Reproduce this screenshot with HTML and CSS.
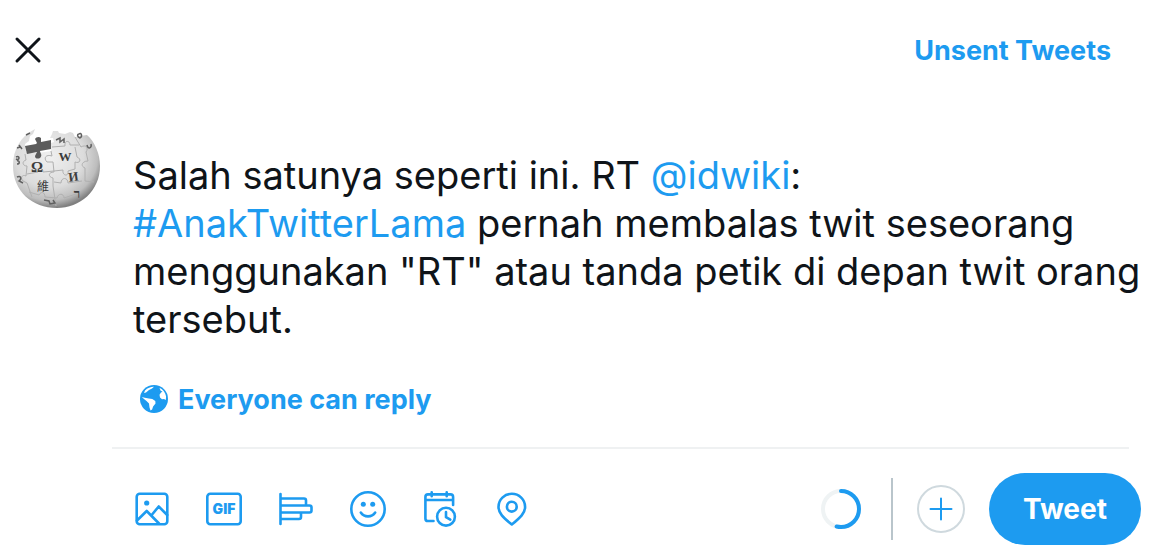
FILE: index.html
```html
<!DOCTYPE html>
<html lang="id">
  <head>
    <meta charset="utf-8">
    <title>Tweet</title>
    <meta name="viewport" content="width=device-width, initial-scale=1">
    <link rel="stylesheet" href="styles.css">
  </head>

  <body>
    <main class="composer">
      <header class="header">
        <button class="icon-button close" type="button" aria-label="Close">
          <svg width="28" height="28" viewBox="0 0 28 28"><path d="M3 3l22 22M25 3L3 25"/></svg>
        </button>
        <a class="unsent" href="#drafts">Unsent Tweets</a>
      </header>

      <div class="body">
        <svg class="avatar" viewBox="0 0 88 92" role="img" aria-label="Wikipedia">
          <defs>
            <radialGradient id="globe" cx="42%" cy="35%" r="65%">
              <stop offset="0" stop-color="#f0f0f0"/>
              <stop offset=".6" stop-color="#dcdcdc"/>
              <stop offset=".85" stop-color="#bdbdbd"/>
              <stop offset="1" stop-color="#808080"/>
            </radialGradient>
          </defs>
          <path fill="url(#globe)" d="M23 9l-2 5-3 2-1 5-4 3 1 8 12 1 13-2 0-8 3-1-1-4-3 0 2-4 1-3 5 0 1 2 6 1 5-2 3 1 2 4 5-1 7-1C83 22 88 34 88 46 88 71 68 88 45 88 20 88 1 71 1 46 1 29 9 16 23 9z"/>
          <path fill="#5c5c5c" d="M13 26l11-2 1-1-2-4c1-2 4-3 6-1l0 4 10-2v9l-11 2c0 2 3 4 0 7-2 1-5 1-5-2l2-4-10 2z"/>
          <g fill="none" stroke="#b0b0b0" stroke-width="1">
            <path d="M13 34l1 6c-4 1-4 6 1 6l-1 10c-4-2-6 2-3 5l4 2 5 14"/>
            <path d="M39 31l1 5c-6-2-9 2-5 6l6 0 1 10c-6 0-6 5-1 6l0 8 3 20"/>
            <path d="M15 54l11-2c0-5 5-5 5 0l11-1 9-1c-1 6 6 7 5 1l7-2M17 72l10 3c2-4 6-3 6 2l12 1c1-5 7-5 7 0l12-4"/>
            <path d="M40 27l13-1c-1-6 5-6 5-1l9 0M63 17l6 10c5-3 8 1 5 5l2 9c-6 0-8 5-3 7l0 13 9 1M42 62l7 1c0-6 7-6 7 0l14-2M63 49l0-7c5 2 7-3 2-5l-2-10"/>
          </g>
          <g class="glyphs" fill="#3c3c3c" text-anchor="middle">
            <text class="omega" x="25" y="52">Ω</text>
            <text x="53" y="41">W</text>
            <text x="62" y="61" transform="rotate(-8 62 61)">И</text>
            <text class="cjk" x="31" y="71">維</text>
            <text x="65" y="78">ר</text>
          </g>
          <g fill="none" stroke="#606060" stroke-width="1.500">
            <path d="M5 28l3-1M7 25l3 4M4 37c4-2 4 4 0 2M5 41c3-1 3 3 0 3M5 57c4-2 5 2 2 4l4 2M14 15l4-2M44 20l4-2v4l4-3v4M67 14c2-2 4 2 1 4-3-1-3-4-1-4zM75 25c1 5 5 3 4-1M32 80l5 1 1 3 5-1-2-3"/>
          </g>
        </svg>

        <div class="content">
          <div class="text" role="textbox" aria-multiline="true" aria-label="Tweet text" contenteditable="true" spellcheck="false">Salah satunya seperti ini. RT <a href="#idwiki">@idwiki</a>:<br><a href="#AnakTwitterLama">#AnakTwitterLama</a> pernah membalas twit seseorang menggunakan "RT" atau tanda petik di depan twit orang tersebut.</div>
          <button class="reply" type="button">
            <svg width="30" height="30" viewBox="0 0 30 30">
              <circle cx="15" cy="15" r="14" fill="#1d9bf0"/>
              <path fill="#fff" d="M6 6.500C8.500 3.800 12 2.600 15 2.700l-2 1.800-3 1.500-3 2.500-2 .5zM2.800 13l3 .8 4 .7 3.500.5 3 2 .2 2.500-2.400 3-1 3-1.600 1-1-3-.5-4-2.500-2.500-2.500-2zM20.500 3.800c3.500 1.700 6 5 6.600 8.700l-.3 3.500-1.800-1-2 .3-2-1.800-.5-2.800 1.500-2.200 1.500-.8-2-1.200z"/>
            </svg>
            <span>Everyone can reply</span>
          </button>
        </div>
      </div>

      <footer class="footer">
        <div class="tools">
          <button class="icon-button" type="button" aria-label="Add photos or video">
            <svg class="icon" viewBox="0 0 40 40">
              <rect x="4.700" y="4.700" width="30.600" height="30.600" rx="3"/>
              <path d="M5 31.500l9.700-9.500L27 34.500M19.700 26l7-8.500 8.500 8.500"/>
              <circle class="dot" cx="14.700" cy="14" r="2.600"/>
            </svg>
          </button>
          <button class="icon-button" type="button" aria-label="Add a GIF">
            <svg class="icon" viewBox="0 0 40 40">
              <rect x="3.300" y="4.700" width="33.400" height="30.600" rx="3"/>
              <text class="gif" x="20" y="25" text-anchor="middle">GIF</text>
            </svg>
          </button>
          <button class="icon-button" type="button" aria-label="Add poll">
            <svg class="icon" viewBox="0 0 40 40">
              <path d="M4.500 5v30M4.500 9.500h23.500q2 0 2 2v5M4.500 16.500h29q2 0 2 2v3q0 2-2 2h-29M25 23.500v4.500q0 2-2 2H4.500"/>
            </svg>
          </button>
          <button class="icon-button" type="button" aria-label="Add emoji">
            <svg class="icon" viewBox="0 0 40 40">
              <circle cx="20" cy="20" r="16.700"/>
              <path d="M12.800 23.500c3.400 5.200 11 5.200 14.400 0"/>
              <circle class="dot" cx="15.300" cy="15.300" r="2.500"/>
              <circle class="dot" cx="24.700" cy="15.300" r="2.500"/>
            </svg>
          </button>
          <button class="icon-button" type="button" aria-label="Schedule Tweet">
            <svg class="icon" viewBox="0 0 40 40">
              <path d="M13.500 32H8q-2.600 0-2.600-2.600V8q0-2.600 2.600-2.600h22.500q2.600 0 2.600 2.600v8M5.400 11h27.700M11.700 3.300v4M26.700 3.300v4"/>
              <circle cx="26" cy="27.700" r="8.900"/>
              <path d="M26 23v5.200l4.300 2.500"/>
            </svg>
          </button>
          <button class="icon-button" type="button" aria-label="Tag location">
            <svg class="icon" viewBox="0 0 40 40">
              <path d="M19.800 35.500C11 28.500 6.500 24 6.500 17.900a13.300 13.100 0 0 1 26.600 0C33.100 24 28.500 28.500 19.800 35.500z"/>
              <circle cx="19.800" cy="17.700" r="4.900"/>
            </svg>
          </button>
        </div>

        <div class="actions">
          <svg class="progress" viewBox="0 0 40 40" role="img" aria-label="Characters used">
            <circle cx="20" cy="20" r="18" stroke="#eff3f4"/>
            <circle cx="20" cy="20" r="18" stroke="#1d9bf0" pathLength="100" stroke-dasharray="54 100" stroke-linecap="round" transform="rotate(-90 20 20)"/>
          </svg>
          <span class="divider"></span>
          <button class="icon-button add" type="button" aria-label="Add Tweet">
            <svg width="24" height="24" viewBox="0 0 24 24"><path d="M12 1.500v21M1.500 12h21"/></svg>
          </button>
          <button class="tweet" type="button">Tweet</button>
        </div>
      </footer>
    </main>
  </body>
</html>
```
FILE: styles.css
```css
* {
  box-sizing: border-box;
}

body {
  margin: 0;
  background: #fff;
  color: #0f1419;
  font-family: Inter, "Liberation Sans", sans-serif;
}

a {
  color: #1d9bf0;
  text-decoration: none;
}

button {
  padding: 0;
  border: 0;
  background: none;
  font: inherit;
  cursor: pointer;
}

svg {
  display: block;
}

.header {
  display: flex;
  align-items: center;
  justify-content: space-between;
  height: 100px;
  padding: 0 43px 0 14px;
}

.close svg {
  fill: none;
  stroke: #0f1419;
  stroke-width: 3;
  stroke-linecap: round;
}

.unsent,
.reply {
  font-size: 27px;
  font-weight: 700;
}

.body {
  display: flex;
  gap: 33px;
  padding: 20px 12px 0;
}

.avatar {
  flex: none;
  width: 88px;
  height: 92px;
}

.glyphs {
  font: bold 13px "Liberation Serif", serif;
}

.glyphs .omega {
  font-size: 15px;
}

.glyphs .cjk {
  font: 12px "Noto Sans CJK TC", sans-serif;
}

.content {
  flex: 1;
  padding-top: 31px;
}

.text {
  font-size: 38px;
  line-height: 48px;
  outline: none;
}

.reply {
  display: flex;
  align-items: center;
  gap: 9px;
  height: 32px;
  margin: 40px 0 32px 6px;
  color: #1d9bf0;
}

.footer {
  display: flex;
  align-items: center;
  justify-content: space-between;
  padding: 26px 13px 11px 132px;
  background: linear-gradient(#eff1f2, #eff1f2) 112px 0 / calc(100% - 137px) 2px no-repeat;
}

.tools,
.actions {
  display: flex;
  align-items: center;
}

.tools {
  gap: 32px;
}

.icon {
  width: 40px;
  height: 40px;
  fill: none;
  stroke: #1d9bf0;
  stroke-width: 2.6;
  stroke-linecap: round;
  stroke-linejoin: round;
}

.icon .dot,
.icon .gif {
  fill: #1d9bf0;
  stroke: none;
}

.icon .gif {
  font-size: 14px;
  font-weight: 900;
}

.actions {
  gap: 24px;
}

.progress {
  width: 40px;
  height: 40px;
  margin-right: 6px;
  fill: none;
  stroke-width: 4;
}

.divider {
  width: 2px;
  height: 62px;
  background: #b9c5cb;
}

.add {
  display: flex;
  align-items: center;
  justify-content: center;
  width: 48px;
  height: 48px;
  border: 2px solid #cfd9de;
  border-radius: 50%;
}

.add svg {
  stroke: #1d9bf0;
  stroke-width: 2;
  stroke-linecap: round;
}

.tweet {
  width: 152px;
  height: 72px;
  border-radius: 36px;
  background: #1d9bf0;
  color: #fff;
  font-size: 28px;
  font-weight: 700;
}
```
